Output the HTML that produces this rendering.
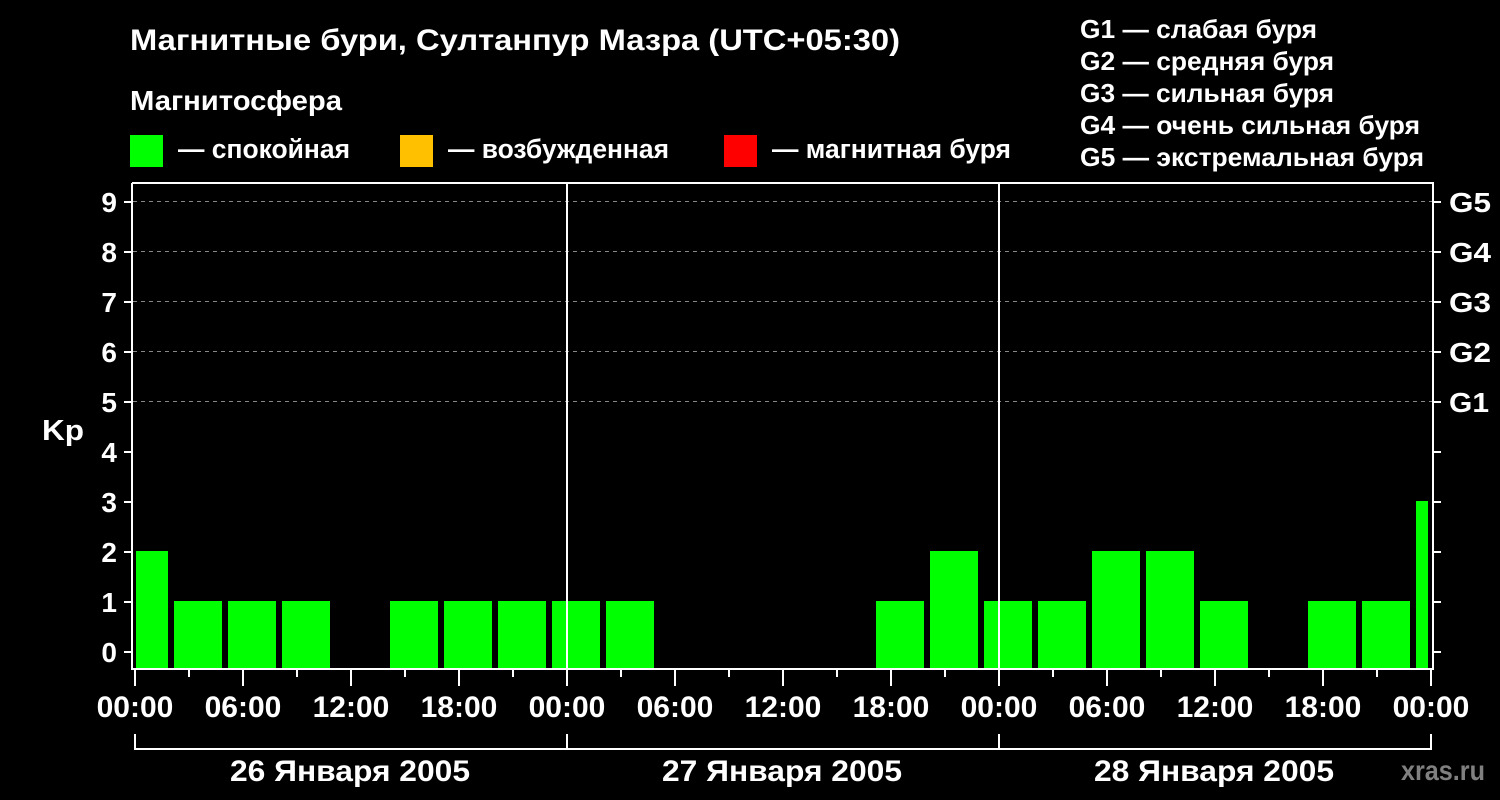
<!DOCTYPE html>
<html><head><meta charset="utf-8"><style>
html,body{margin:0;padding:0;background:#000;}
svg{display:block}
text{font-family:"Liberation Sans",Arial,sans-serif;font-weight:bold;fill:#fff}
</style></head><body>
<svg width="1500" height="800" viewBox="0 0 1500 800" xmlns="http://www.w3.org/2000/svg">
<rect width="1500" height="800" fill="#000"/>
<text x="130" y="50" font-size="30" textLength="770" lengthAdjust="spacingAndGlyphs">Магнитные бури, Султанпур Мазра (UTC+05:30)</text>
<text x="130" y="110" font-size="28" textLength="212" lengthAdjust="spacingAndGlyphs">Магнитосфера</text>
<rect x="130" y="135" width="33" height="32" fill="#00ff00"/>
<text x="178" y="158" font-size="27" textLength="172" lengthAdjust="spacingAndGlyphs">— спокойная</text>
<rect x="400" y="135" width="33" height="32" fill="#ffc000"/>
<text x="448" y="158" font-size="27" textLength="221" lengthAdjust="spacingAndGlyphs">— возбужденная</text>
<rect x="724" y="135" width="33" height="32" fill="#ff0000"/>
<text x="772" y="158" font-size="27" textLength="239" lengthAdjust="spacingAndGlyphs">— магнитная буря</text>
<g font-size="26">
<text x="1080" y="38" textLength="237" lengthAdjust="spacingAndGlyphs">G1 — слабая буря</text>
<text x="1080" y="70" textLength="254" lengthAdjust="spacingAndGlyphs">G2 — средняя буря</text>
<text x="1080" y="102" textLength="254" lengthAdjust="spacingAndGlyphs">G3 — сильная буря</text>
<text x="1080" y="134" textLength="340" lengthAdjust="spacingAndGlyphs">G4 — очень сильная буря</text>
<text x="1080" y="166" textLength="344" lengthAdjust="spacingAndGlyphs">G5 — экстремальная буря</text>
</g>
<g stroke="#888" stroke-width="1" stroke-dasharray="4,4">
<line x1="133" y1="201.5" x2="1432" y2="201.5"/>
<line x1="133" y1="251.5" x2="1432" y2="251.5"/>
<line x1="133" y1="301.5" x2="1432" y2="301.5"/>
<line x1="133" y1="351.5" x2="1432" y2="351.5"/>
<line x1="133" y1="401.5" x2="1432" y2="401.5"/>
</g>
<g fill="#00ff00">
<rect x="136" y="551" width="32" height="117"/>
<rect x="174" y="601" width="48" height="67"/>
<rect x="228" y="601" width="48" height="67"/>
<rect x="282" y="601" width="48" height="67"/>
<rect x="390" y="601" width="48" height="67"/>
<rect x="444" y="601" width="48" height="67"/>
<rect x="498" y="601" width="48" height="67"/>
<rect x="552" y="601" width="48" height="67"/>
<rect x="606" y="601" width="48" height="67"/>
<rect x="876" y="601" width="48" height="67"/>
<rect x="930" y="551" width="48" height="117"/>
<rect x="984" y="601" width="48" height="67"/>
<rect x="1038" y="601" width="48" height="67"/>
<rect x="1092" y="551" width="48" height="117"/>
<rect x="1146" y="551" width="48" height="117"/>
<rect x="1200" y="601" width="48" height="67"/>
<rect x="1308" y="601" width="48" height="67"/>
<rect x="1362" y="601" width="48" height="67"/>
<rect x="1416" y="501" width="12" height="167"/>
</g>
<g stroke="#fff" stroke-width="2" fill="none">
<polyline points="132,183 1433,183 1433,669 132,669 132,183"/>
<line x1="567" y1="183" x2="567" y2="669"/>
<line x1="999" y1="183" x2="999" y2="669"/>
</g>
<g stroke="#fff" stroke-width="2">
<line x1="124" y1="652" x2="132" y2="652"/><line x1="124" y1="602" x2="132" y2="602"/>
<line x1="124" y1="552" x2="132" y2="552"/><line x1="124" y1="502" x2="132" y2="502"/>
<line x1="124" y1="452" x2="132" y2="452"/><line x1="124" y1="402" x2="132" y2="402"/>
<line x1="124" y1="352" x2="132" y2="352"/><line x1="124" y1="302" x2="132" y2="302"/>
<line x1="124" y1="252" x2="132" y2="252"/><line x1="124" y1="202" x2="132" y2="202"/>
<line x1="1433" y1="652" x2="1441" y2="652"/><line x1="1433" y1="602" x2="1441" y2="602"/>
<line x1="1433" y1="552" x2="1441" y2="552"/><line x1="1433" y1="502" x2="1441" y2="502"/>
<line x1="1433" y1="452" x2="1441" y2="452"/><line x1="1433" y1="402" x2="1441" y2="402"/>
<line x1="1433" y1="352" x2="1441" y2="352"/><line x1="1433" y1="302" x2="1441" y2="302"/>
<line x1="1433" y1="252" x2="1441" y2="252"/><line x1="1433" y1="202" x2="1441" y2="202"/>
</g>
<g font-size="28" text-anchor="end">
<text x="117" y="662">0</text><text x="117" y="612">1</text><text x="117" y="562">2</text>
<text x="117" y="512">3</text><text x="117" y="462">4</text><text x="117" y="412">5</text>
<text x="117" y="362">6</text><text x="117" y="312">7</text><text x="117" y="262">8</text>
<text x="117" y="212">9</text>
</g>
<text x="42" y="440" font-size="29" textLength="42" lengthAdjust="spacingAndGlyphs">Kp</text>
<g font-size="28">
<text x="1449" y="212" textLength="42" lengthAdjust="spacingAndGlyphs">G5</text>
<text x="1449" y="262" textLength="42" lengthAdjust="spacingAndGlyphs">G4</text>
<text x="1449" y="312" textLength="42" lengthAdjust="spacingAndGlyphs">G3</text>
<text x="1449" y="362" textLength="42" lengthAdjust="spacingAndGlyphs">G2</text>
<text x="1449" y="412" textLength="40" lengthAdjust="spacingAndGlyphs">G1</text>
</g>
<g stroke="#fff" stroke-width="2">
<line x1="135" y1="670" x2="135" y2="686"/><line x1="189" y1="670" x2="189" y2="677"/>
<line x1="243" y1="670" x2="243" y2="686"/><line x1="297" y1="670" x2="297" y2="677"/>
<line x1="351" y1="670" x2="351" y2="686"/><line x1="405" y1="670" x2="405" y2="677"/>
<line x1="459" y1="670" x2="459" y2="686"/><line x1="513" y1="670" x2="513" y2="677"/>
<line x1="567" y1="670" x2="567" y2="686"/><line x1="621" y1="670" x2="621" y2="677"/>
<line x1="675" y1="670" x2="675" y2="686"/><line x1="729" y1="670" x2="729" y2="677"/>
<line x1="783" y1="670" x2="783" y2="686"/><line x1="837" y1="670" x2="837" y2="677"/>
<line x1="891" y1="670" x2="891" y2="686"/><line x1="945" y1="670" x2="945" y2="677"/>
<line x1="999" y1="670" x2="999" y2="686"/><line x1="1053" y1="670" x2="1053" y2="677"/>
<line x1="1107" y1="670" x2="1107" y2="686"/><line x1="1161" y1="670" x2="1161" y2="677"/>
<line x1="1215" y1="670" x2="1215" y2="686"/><line x1="1269" y1="670" x2="1269" y2="677"/>
<line x1="1323" y1="670" x2="1323" y2="686"/><line x1="1377" y1="670" x2="1377" y2="677"/>
<line x1="1431" y1="670" x2="1431" y2="686"/>
</g>
<g font-size="30" text-anchor="middle">
<text x="135" y="717">00:00</text><text x="243" y="717">06:00</text><text x="351" y="717">12:00</text>
<text x="459" y="717">18:00</text><text x="567" y="717">00:00</text><text x="675" y="717">06:00</text>
<text x="783" y="717">12:00</text><text x="891" y="717">18:00</text><text x="999" y="717">00:00</text>
<text x="1107" y="717">06:00</text><text x="1215" y="717">12:00</text><text x="1323" y="717">18:00</text>
<text x="1431" y="717">00:00</text>
</g>
<g stroke="#fff" stroke-width="2" fill="none">
<polyline points="135,734 135,749 1431,749 1431,734"/>
<line x1="567" y1="734" x2="567" y2="749"/>
<line x1="999" y1="734" x2="999" y2="749"/>
</g>
<g font-size="30" text-anchor="middle">
<text x="350" y="781" textLength="240" lengthAdjust="spacingAndGlyphs">26 Января 2005</text>
<text x="782" y="781" textLength="240" lengthAdjust="spacingAndGlyphs">27 Января 2005</text>
<text x="1214" y="781" textLength="240" lengthAdjust="spacingAndGlyphs">28 Января 2005</text>
</g>
<text x="1401" y="780" font-size="28" textLength="84" lengthAdjust="spacingAndGlyphs" style="fill:#808080">xras.ru</text>
</svg>
</body></html>
